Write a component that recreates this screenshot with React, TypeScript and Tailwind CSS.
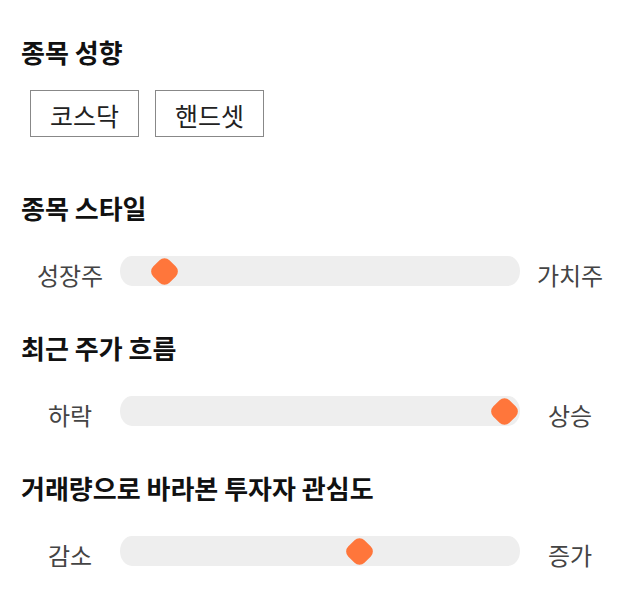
import React from 'react';

const sliders = [
  { title: '종목 스타일', left: '성장주', right: '가치주', pos: 11 },
  { title: '최근 주가 흐름', left: '하락', right: '상승', pos: 96 },
  { title: '거래량으로 바라본 투자자 관심도', left: '감소', right: '증가', pos: 59.75 },
];

const font = { fontFamily: '"Noto Sans CJK KR", "Noto Sans", sans-serif' };

function Slider({ left, right, pos }: { left: string; right: string; pos: number }) {
  return (
    <div className="flex items-center h-[30px]">
      <div className="w-[100px] pt-2 text-center text-[24px] leading-[30px] text-[#444]">{left}</div>
      <div className="relative flex-1 h-[30px] bg-[#eeeeee] rounded-[12px/15px]">
        <div
          className="absolute top-[3.5px] w-[23px] h-[23px] -ml-[11.5px] bg-[#ff763b] rounded-[7px] rotate-45"
          style={{ left: `${pos}%` }}
        />
      </div>
      <div className="w-[100px] pt-2 text-center text-[24px] leading-[30px] text-[#444]">{right}</div>
    </div>
  );
}

export default function App() {
  return (
    <div className="w-[640px] h-[606px] bg-white px-5 pt-[37px]" style={font}>
      <h2 className="pl-px text-[26px] leading-[30px] font-bold text-[#111]">종목 성향</h2>
      <div className="flex gap-4 ml-[10px] mt-[23px]">
        <button className="w-[109px] h-[47px] pt-1 border border-[#888] text-[25px] text-[#222]">코스닥</button>
        <button className="w-[109px] h-[47px] pt-1 border border-[#888] text-[25px] text-[#222]">핸드셋</button>
      </div>
      {sliders.map((s, i) => (
        <div key={i} className={i === 0 ? 'mt-[56px]' : 'mt-[47px]'}>
          <h2 className="pl-px text-[26px] leading-[30px] font-bold text-[#111]">{s.title}</h2>
          <div className="mt-[33px]">
            <Slider left={s.left} right={s.right} pos={s.pos} />
          </div>
        </div>
      ))}
    </div>
  );
}
